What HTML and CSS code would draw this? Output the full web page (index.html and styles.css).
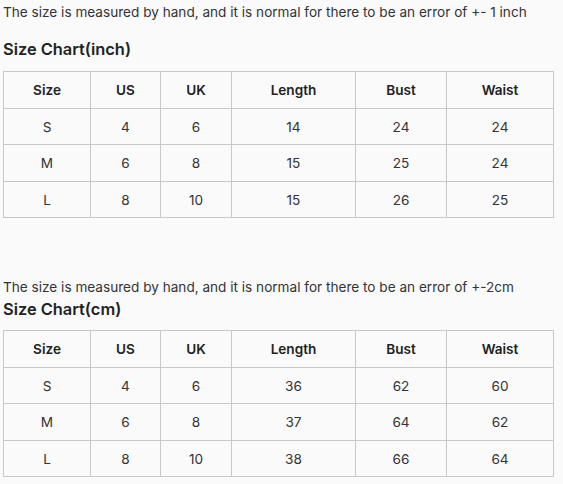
FILE: index.html
```html
<!DOCTYPE html>
<html>
<head>
<meta charset="utf-8">
<link rel="stylesheet" href="styles.css">
</head>
<body>
<div class="page">
  <p class="note">The size is measured by hand, and it is normal for there to be an error of +- 1 inch</p>
  <h2 class="title">Size Chart(inch)</h2>
  <table class="chart">
    <colgroup><col class="c1"><col class="c2"><col class="c3"><col class="c4"><col class="c5"><col class="c6"></colgroup>
    <thead><tr><th>Size</th><th>US</th><th>UK</th><th>Length</th><th>Bust</th><th>Waist</th></tr></thead>
    <tbody>
      <tr><td>S</td><td>4</td><td>6</td><td>14</td><td>24</td><td>24</td></tr>
      <tr><td>M</td><td>6</td><td>8</td><td>15</td><td>25</td><td>24</td></tr>
      <tr><td>L</td><td>8</td><td>10</td><td>15</td><td>26</td><td>25</td></tr>
    </tbody>
  </table>
  <p class="note note-second">The size is measured by hand, and it is normal for there to be an error of +-2cm</p>
  <h2 class="title title-tight">Size Chart(cm)</h2>
  <table class="chart">
    <colgroup><col class="c1"><col class="c2"><col class="c3"><col class="c4"><col class="c5"><col class="c6"></colgroup>
    <thead><tr><th>Size</th><th>US</th><th>UK</th><th>Length</th><th>Bust</th><th>Waist</th></tr></thead>
    <tbody>
      <tr><td>S</td><td>4</td><td>6</td><td>36</td><td>62</td><td>60</td></tr>
      <tr><td>M</td><td>6</td><td>8</td><td>37</td><td>64</td><td>62</td></tr>
      <tr><td>L</td><td>8</td><td>10</td><td>38</td><td>66</td><td>64</td></tr>
    </tbody>
  </table>
</div>
</body>
</html>
```
FILE: styles.css
```css
html, body {
  margin: 0;
  padding: 0;
  background: #fafafa;
}
body {
  font-family: Inter, "Noto Sans", sans-serif;
  color: #333;
}
.page {
  padding: 2px 0 0 3px;
}
.note {
  margin: 0;
  font-size: 13.6px;
  line-height: 20px;
  color: #333;
}
.note-second {
  margin-top: 59px;
}
.title {
  margin: 16px 0 11px;
  font-size: 16.4px;
  line-height: 22px;
  font-weight: 600;
  color: #222;
}
.title-tight {
  margin-top: 1px;
  margin-bottom: 10px;
}
.chart {
  border-collapse: collapse;
  table-layout: fixed;
  width: 550px;
  font-size: 13.6px;
}
.c1 { width: 87px; }
.c2 { width: 70px; }
.c3 { width: 71px; }
.c4 { width: 124px; }
.c5 { width: 91px; }
.c6 { width: 107px; }
.chart th, .chart td {
  border: 1px solid #c8c8c8;
  height: 34.5px;
  padding: 1px 0 0;
  text-align: center;
  vertical-align: middle;
  line-height: 20px;
}
.chart th {
  font-weight: 600;
  color: #222;
}
.chart td {
  font-weight: 400;
  color: #333;
}
```
